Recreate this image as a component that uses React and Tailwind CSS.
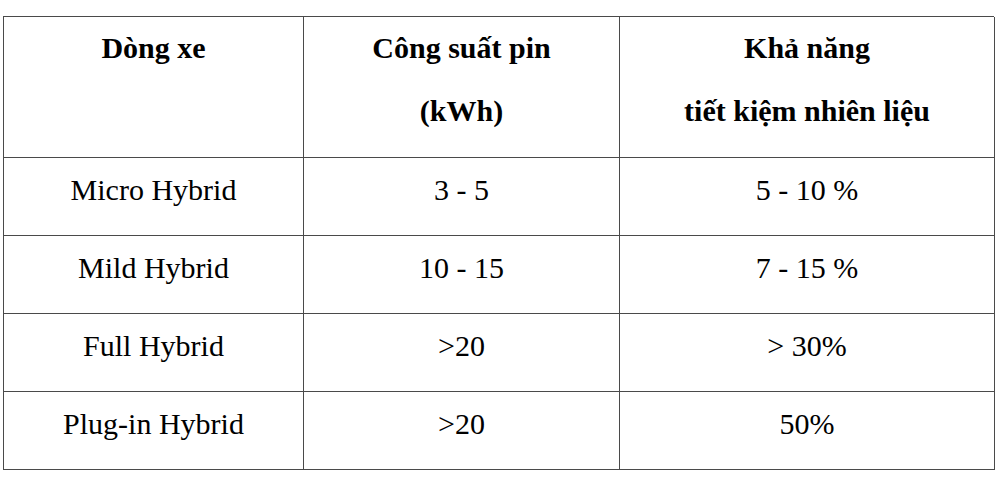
import React from "react";

const rows = [
  ["Micro Hybrid", "3 - 5", "5 - 10 %"],
  ["Mild Hybrid", "10 - 15", "7 - 15 %"],
  ["Full Hybrid", ">20", "> 30%"],
  ["Plug-in Hybrid", ">20", "50%"],
];

export default function App() {
  return (
    <div className="w-[1000px] h-[488px] bg-white text-black pt-[16px] pl-[3px] font-['Liberation_Serif','DejaVu_Serif',serif]">
      <div className="w-[991px] border-t border-l border-[#4a4a4a] grid grid-cols-[300px_316px_375px]">
        {[
          ["Dòng xe"],
          ["Công suất pin", "(kWh)"],
          ["Khả năng", "tiết kiệm nhiên liệu"],
        ].map((lines, i) => (
          <div
            key={i}
            className="h-[141px] border-r border-b border-[#4a4a4a] pt-[3px] text-center font-bold text-[30px] leading-[55px] flex flex-col gap-[8px]"
          >
            {lines.map((l, j) => (
              <div key={j}>{l}</div>
            ))}
          </div>
        ))}
        {rows.map((r, ri) =>
          r.map((c, ci) => (
            <div
              key={ri + "-" + ci}
              className="h-[78px] border-r border-b border-[#4a4a4a] pt-[4px] text-center text-[30px] leading-[55px]"
            >
              {c}
            </div>
          ))
        )}
      </div>
    </div>
  );
}
